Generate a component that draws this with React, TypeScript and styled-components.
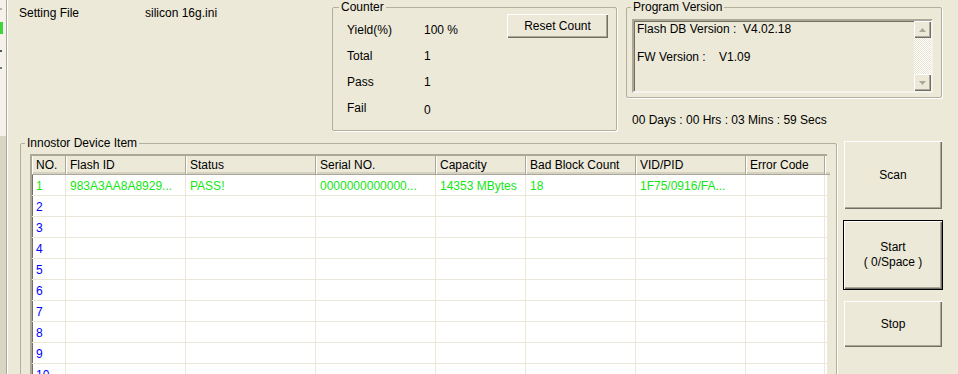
import { Fragment } from "react";
import styled, { createGlobalStyle } from "styled-components";

const GlobalStyle = createGlobalStyle`
  html, body {
    margin: 0;
    padding: 0;
    background: #ece9d8;
  }
  * {
    box-sizing: border-box;
  }
`;

const Window = styled.div`
  width: 958px;
  height: 374px;
  overflow: hidden;
  display: flex;
  background: #ece9d8;
  color: #000;
  font-family: "Liberation Sans", Arial, sans-serif;
  font-size: 12px;
  line-height: 14px;
`;

const SideStrip = styled.div`
  flex: none;
  width: 7px;
  display: flex;
  flex-direction: column;
  border-right: 1px solid #aca899;
`;

const StripTop = styled.div`
  height: 136px;
  background: #f4f2ea;
  display: flex;
  flex-direction: column;
  align-items: flex-start;
`;

const StripMark = styled.div<{ $color: string; $top: number; $h: number; $w?: number }>`
  margin-top: ${(p) => p.$top}px;
  width: ${(p) => p.$w ?? 2}px;
  height: ${(p) => p.$h}px;
  background: ${(p) => p.$color};
`;

const StripBottom = styled.div`
  flex: 1;
  background: #d9d5c3;
`;

const Main = styled.div`
  flex: 1;
  min-width: 0;
  display: flex;
  flex-direction: column;
  box-shadow: inset 1px 0 0 #fff;
`;

const TopRow = styled.div`
  height: 136px;
  flex: none;
  display: flex;
  padding-left: 12px;
`;

const SettingRow = styled.div`
  width: 313px;
  padding-top: 6px;
  display: flex;
  align-items: flex-start;
`;

const SettingLabel = styled.span`
  width: 126px;
`;

const Group = styled.fieldset<{ $w: number; $h: number }>`
  margin: 0;
  padding: 0;
  min-width: 0;
  flex: none;
  width: ${(p) => p.$w}px;
  height: ${(p) => p.$h}px;
  border: 1px solid #b2af9c;
  border-radius: 2px;
  box-shadow: 1px 1px 0 #fff;
`;

const GroupTitle = styled.legend<{ $indent: number }>`
  margin-left: ${(p) => p.$indent}px;
  padding: 0 2px;
  line-height: 14px;
`;

const CounterBody = styled.div`
  display: flex;
  justify-content: space-between;
  align-items: flex-start;
  padding: 3px 7px 0 14px;
`;

const StatGrid = styled.div`
  display: grid;
  grid-template-columns: 77px auto;
  grid-auto-rows: 26px;
  align-items: center;
`;

const StatValue = styled.span<{ $drop?: number }>`
  position: relative;
  top: ${(p) => p.$drop ?? 0}px;
`;

const WinButton = styled.button<{ $w: number; $h: number; $default?: boolean }>`
  width: ${(p) => p.$w}px;
  height: ${(p) => p.$h}px;
  flex: none;
  padding: 0;
  font: inherit;
  color: #000;
  background: #ece9d8;
  border: 1px solid ${(p) => (p.$default ? "#000" : "transparent")};
  box-shadow: inset 1px 1px 0 #fff, inset -1px -1px 0 #716f64,
    inset -2px -2px 0 #aca899;
  display: flex;
  flex-direction: column;
  align-items: center;
  justify-content: center;
  line-height: 15px;
  cursor: default;
`;

const ResetButton = styled(WinButton)`
  margin-top: -4px;
`;

const ProgramColumn = styled.div`
  width: 316px;
  margin-left: 9px;
  display: flex;
  flex-direction: column;
`;

const ProgramBody = styled.div`
  padding: 5px 8px 0 5px;
`;

const VersionBox = styled.div`
  height: 74px;
  display: flex;
  border-style: solid;
  border-width: 2px;
  border-color: #aca899 #f4f3ee #f4f3ee #aca899;
  box-shadow: inset 1px 1px 0 #716f64;
`;

const VersionText = styled.div`
  flex: 1;
  padding: 1px 0 0 3px;
  white-space: pre;
`;

const VersionLine = styled.div<{ $gap?: number }>`
  margin-top: ${(p) => p.$gap ?? 0}px;
`;

const ScrollBar = styled.div`
  width: 17px;
  display: flex;
  flex-direction: column;
`;

const ScrollArrow = styled.div`
  height: 17px;
  display: flex;
  align-items: center;
  justify-content: center;
  background: #ece9d8;
  box-shadow: inset 1px 1px 0 #fff, inset -1px -1px 0 #716f64,
    inset -2px -2px 0 #aca899;
`;

const ScrollTrack = styled.div`
  flex: 1;
  background: repeating-conic-gradient(#fff 0 25%, #e6e3d3 0 50%) 0 0 / 2px 2px;
`;

const Timer = styled.div`
  margin-top: 15px;
  padding-left: 6px;
`;

const BottomRow = styled.div`
  display: flex;
  gap: 6px;
  padding-left: 13px;
`;

const DeviceBody = styled.div`
  padding: 4px 9px 0 9px;
`;

const DeviceList = styled.div`
  background: #fff;
  border-left: 2px solid #aca899;
  border-top: 2px solid #aca899;
  box-shadow: inset 1px 1px 0 #716f64;
  display: grid;
  grid-template-columns: 34px 120px 130px 120px 90px 110px 110px 79px 1fr;
`;

const HeaderCell = styled.div`
  height: 19px;
  padding: 2px 0 0 4px;
  background: #ece9d8;
  border-right: 1px solid #aca899;
  border-bottom: 1px solid #aca899;
  box-shadow: inset 1px 0 0 #fff, inset 0 -2px 0 #d6d2c2;
  white-space: nowrap;
  overflow: hidden;
`;

const HeaderFill = styled(HeaderCell)`
  border-right: none;
`;

const Cell = styled.div<{ $color: string }>`
  height: 21px;
  padding: 4px 0 0 4px;
  color: ${(p) => p.$color};
  border-right: 1px solid #ebe8da;
  border-bottom: 1px solid #ebe8da;
  white-space: nowrap;
  overflow: hidden;
`;

const ButtonColumn = styled.div`
  margin-top: 4px;
  display: flex;
  flex-direction: column;
  gap: 10px;
`;

const columns = [
  "NO.",
  "Flash ID",
  "Status",
  "Serial NO.",
  "Capacity",
  "Bad Block Count",
  "VID/PID",
  "Error Code",
];

const firstRow = [
  "1",
  "983A3AA8A8929...",
  "PASS!",
  "0000000000000...",
  "14353 MBytes",
  "18",
  "1F75/0916/FA...",
  "",
  "",
];

const stats = [
  { label: "Yield(%)", value: "100 %", drop: 0 },
  { label: "Total", value: "1", drop: 0 },
  { label: "Pass", value: "1", drop: 0 },
  { label: "Fail", value: "0", drop: 2 },
];

function Arrow({ up }: { up?: boolean }) {
  return (
    <svg width="7" height="4" viewBox="0 0 7 4">
      <polygon
        points={up ? "3.5,0 7,4 0,4" : "0,0 7,0 3.5,4"}
        fill="#aca899"
      />
    </svg>
  );
}

export default function App() {
  const rows = Array.from({ length: 12 }, (_, i) => i + 1);

  return (
    <>
      <GlobalStyle />
      <Window>
        <SideStrip>
          <StripTop>
            <StripMark $color="#b9b6a8" $top={8} $h={2} />
            <StripMark $color="#3ed43e" $top={12} $h={12} $w={3} />
            <StripMark $color="#555" $top={16} $h={2} />
            <StripMark $color="#777" $top={15} $h={2} />
          </StripTop>
          <StripBottom />
        </SideStrip>

        <Main>
          <TopRow>
            <SettingRow>
              <SettingLabel>Setting File</SettingLabel>
              <span>silicon 16g.ini</span>
            </SettingRow>

            <Group $w={285} $h={131}>
              <GroupTitle $indent={6}>Counter</GroupTitle>
              <CounterBody>
                <StatGrid>
                  {stats.map((s) => (
                    <Fragment key={s.label}>
                      <span>{s.label}</span>
                      <StatValue $drop={s.drop}>{s.value}</StatValue>
                    </Fragment>
                  ))}
                </StatGrid>
                <ResetButton $w={103} $h={26}>
                  Reset Count
                </ResetButton>
              </CounterBody>
            </Group>

            <ProgramColumn>
              <Group $w={316} $h={98}>
                <GroupTitle $indent={4}>Program Version</GroupTitle>
                <ProgramBody>
                  <VersionBox>
                    <VersionText>
                      <VersionLine>Flash DB Version :  V4.02.18</VersionLine>
                      <VersionLine $gap={14}>FW Version :    V1.09</VersionLine>
                    </VersionText>
                    <ScrollBar>
                      <ScrollArrow>
                        <Arrow up />
                      </ScrollArrow>
                      <ScrollTrack />
                      <ScrollArrow>
                        <Arrow />
                      </ScrollArrow>
                    </ScrollBar>
                  </VersionBox>
                </ProgramBody>
              </Group>
              <Timer>00 Days : 00 Hrs : 03 Mins : 59 Secs</Timer>
            </ProgramColumn>
          </TopRow>

          <BottomRow>
            <Group $w={817} $h={320}>
              <GroupTitle $indent={4}>Innostor Device Item</GroupTitle>
              <DeviceBody>
                <DeviceList>
                  {columns.map((c) => (
                    <HeaderCell key={c}>{c}</HeaderCell>
                  ))}
                  <HeaderFill />
                  {firstRow.map((v, i) => (
                    <Cell key={"r1-" + i} $color="#14e614">
                      {v}
                    </Cell>
                  ))}
                  {rows.slice(1).map((n) =>
                    firstRow.map((_, i) => (
                      <Cell key={`r${n}-${i}`} $color="#0000ff">
                        {i === 0 ? n : ""}
                      </Cell>
                    ))
                  )}
                </DeviceList>
              </DeviceBody>
            </Group>

            <ButtonColumn>
              <WinButton $w={100} $h={70}>
                Scan
              </WinButton>
              <WinButton $w={100} $h={70} $default>
                <span>Start</span>
                <span>( 0/Space )</span>
              </WinButton>
              <WinButton $w={100} $h={48}>
                Stop
              </WinButton>
            </ButtonColumn>
          </BottomRow>
        </Main>
      </Window>
    </>
  );
}
